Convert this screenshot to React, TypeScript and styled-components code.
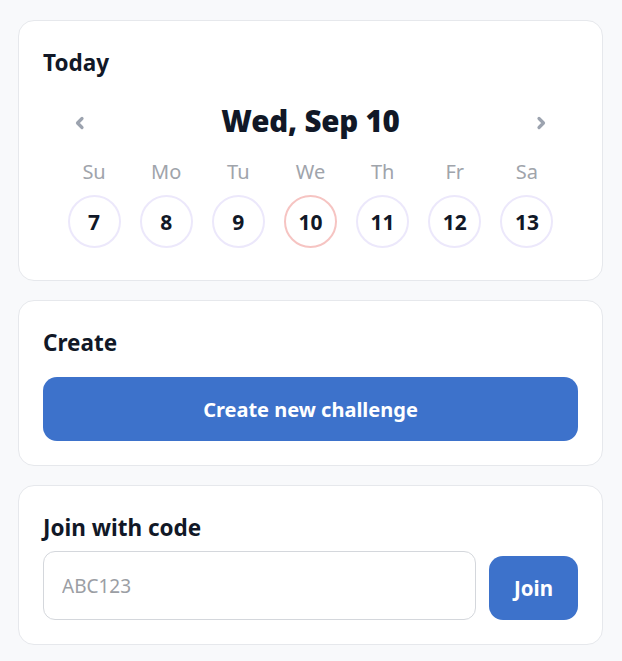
import React, { useState } from 'react';
import styled, { createGlobalStyle } from 'styled-components';

const GlobalStyle = createGlobalStyle`
  * {
    box-sizing: border-box;
  }
  body {
    margin: 0;
    background: #f8f9fb;
    font-family: 'Noto Sans', 'Open Sans', sans-serif;
    color: #111827;
  }
`;

const Container = styled.div`
  display: flex;
  flex-direction: column;
  gap: 19px;
  padding: 20px 19px 20px 18px;
`;

const Card = styled.section`
  background: #ffffff;
  border: 1px solid #e6e8ec;
  border-radius: 16px;
  padding: 27px 24px 24px;
`;

const CardTitle = styled.h2`
  margin: 0;
  font-size: 22.5px;
  line-height: 30px;
  font-weight: 700;
  color: #111827;
`;

const DateHeader = styled.div`
  display: flex;
  align-items: center;
  justify-content: space-between;
  padding: 0 15px;
  margin-top: 22px;
  height: 40px;
`;

const Chevron = styled.button`
  width: 44px;
  height: 40px;
  border: none;
  background: none;
  padding: 6px 0 0;
  color: #9ca3af;
  display: flex;
  align-items: center;
  justify-content: center;
  cursor: pointer;
`;

const DateLabel = styled.div`
  font-size: 29.5px;
  font-weight: 900;
  letter-spacing: -0.2px;
  color: #111827;
`;

const WeekGrid = styled.div`
  display: grid;
  grid-template-columns: repeat(7, 1fr);
  padding: 0 15px;
  margin-top: 20px;
  row-gap: 11px;
  justify-items: center;
`;

const WeekDay = styled.div`
  font-size: 20px;
  font-weight: 400;
  color: #a0a4ab;
  line-height: 24px;
`;

const DayCircle = styled.button<{ $today?: boolean }>`
  width: 53px;
  height: 53px;
  border-radius: 50%;
  border: 2px solid ${(p) => (p.$today ? '#f6c4c2' : '#ece8fb')};
  background: #ffffff;
  font-family: inherit;
  font-size: 21px;
  font-weight: 700;
  color: #111827;
  padding: 0;
  cursor: pointer;
  margin-bottom: 8px;
`;

const PrimaryButton = styled.button`
  width: 100%;
  height: 64px;
  margin-top: 19px;
  border: none;
  border-radius: 14px;
  background: #3d72cb;
  color: #ffffff;
  font-family: inherit;
  font-size: 20px;
  font-weight: 700;
  cursor: pointer;
`;

const JoinRow = styled.div`
  display: flex;
  align-items: flex-end;
  gap: 13px;
  margin-top: 8px;
`;

const CodeInput = styled.input`
  flex: 1;
  min-width: 0;
  height: 69px;
  border: 1px solid #d4d7dc;
  border-radius: 12px;
  padding: 0 18px;
  font-family: inherit;
  font-size: 19px;
  color: #111827;
  outline: none;
  &::placeholder {
    color: #9b9ea4;
  }
`;

const JoinButton = styled.button`
  width: 89px;
  height: 64px;
  border: none;
  border-radius: 14px;
  background: #3d72cb;
  color: #ffffff;
  font-family: inherit;
  font-size: 20.5px;
  font-weight: 700;
  cursor: pointer;
`;

const ChevronIcon = ({ dir }: { dir: 'left' | 'right' }) => (
  <svg width="14" height="14" viewBox="0 0 14 14">
    <path
      d={dir === 'left' ? 'M9 2.5 L4.5 7 L9 11.5' : 'M5 2.5 L9.5 7 L5 11.5'}
      fill="none"
      stroke="currentColor"
      strokeWidth="3.2"
      strokeLinecap="round"
      strokeLinejoin="round"
    />
  </svg>
);

const days = [
  { label: 'Su', day: 7 },
  { label: 'Mo', day: 8 },
  { label: 'Tu', day: 9 },
  { label: 'We', day: 10 },
  { label: 'Th', day: 11 },
  { label: 'Fr', day: 12 },
  { label: 'Sa', day: 13 },
];

const App: React.FC = () => {
  const [code, setCode] = useState('');

  return (
    <>
      <GlobalStyle />
      <Container>
        <Card>
          <CardTitle>Today</CardTitle>
          <DateHeader>
            <Chevron aria-label="Previous day">
              <ChevronIcon dir="left" />
            </Chevron>
            <DateLabel>Wed, Sep 10</DateLabel>
            <Chevron aria-label="Next day">
              <ChevronIcon dir="right" />
            </Chevron>
          </DateHeader>
          <WeekGrid>
            {days.map((d) => (
              <WeekDay key={d.label}>{d.label}</WeekDay>
            ))}
            {days.map((d) => (
              <DayCircle key={d.day} $today={d.day === 10}>
                {d.day}
              </DayCircle>
            ))}
          </WeekGrid>
        </Card>
        <Card>
          <CardTitle>Create</CardTitle>
          <PrimaryButton>Create new challenge</PrimaryButton>
        </Card>
        <Card>
          <CardTitle>Join with code</CardTitle>
          <JoinRow>
            <CodeInput
              placeholder="ABC123"
              value={code}
              onChange={(e) => setCode(e.target.value)}
            />
            <JoinButton>Join</JoinButton>
          </JoinRow>
        </Card>
      </Container>
    </>
  );
};

export default App;
